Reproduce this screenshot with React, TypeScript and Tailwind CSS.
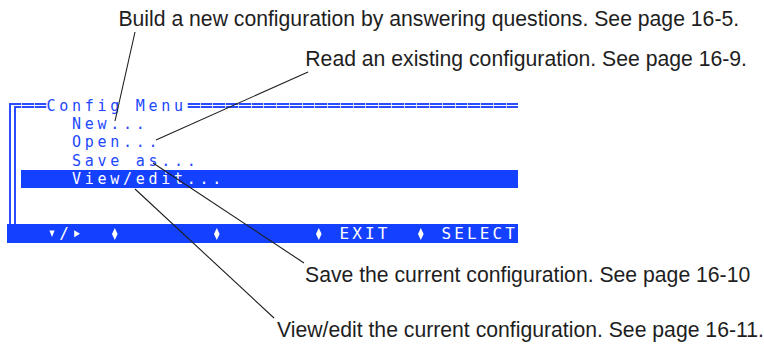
import React from "react";

// one terminal cell = 12.74px wide
const BLUE = "#1440ff";

function DoubleLine({ className = "" }: { className?: string }) {
  return (
    <div className={`mt-[6.5px] flex flex-col gap-[1px] ${className}`}>
      <div className="h-[2px] bg-[repeating-linear-gradient(90deg,#c3ccff_0_1px,#2a4dff_1px_12.74px)]" />
      <div className="h-[2px] bg-[repeating-linear-gradient(90deg,#c3ccff_0_1px,#2a4dff_1px_12.74px)]" />
    </div>
  );
}

function Glyph({ points }: { points: string }) {
  return (
    <span className="inline-block w-[12.74px] h-[19px] align-top">
      <svg width="12.74" height="19" viewBox="0 0 12.74 19">
        <polygon points={points} fill="#ffffff" />
      </svg>
    </span>
  );
}

const DIAMOND = "4.8,4 7.6,10 4.8,16 2,10";
const DOWN = "2.4,6.5 7.6,6.5 5,13";
const RIGHT = "2.2,6.2 8,9.7 2.2,13.2";

function MenuRow({ label, active }: { label?: string; active?: boolean }) {
  return (
    <div
      className={`h-[18.2px] leading-[18.2px] pl-[50.96px] whitespace-pre ${
        active ? "bg-[#1440ff] text-white" : "text-[#2248ff]"
      }`}
    >
      {label}
    </div>
  );
}

function Note({ text, className }: { text: string; className: string }) {
  return (
    <div className={`h-[24px] leading-[24px] text-[21.2px] text-[#1e1e1e] whitespace-nowrap ${className}`}>
      {text}
    </div>
  );
}

export default function App() {
  return (
    <div className="relative w-[764px] h-[344px] bg-white overflow-hidden font-['Liberation_Sans',Arial,sans-serif]">
      <Note text="Build a new configuration by answering questions. See page 16-5." className="mt-[7.4px] pl-[118.4px]" />
      <Note text="Read an existing configuration. See page 16-9." className="mt-[15.8px] pl-[305.3px]" />

      <div className="mt-[25.8px] ml-[8.3px] w-[509.6px] font-['DejaVu_Sans_Mono',monospace] text-[15px] tracking-[3.71px]">
        <div className="flex">
          <div className="w-[12.74px] shrink-0 flex flex-col">
            <div className="flex-1 mt-[6.5px] ml-[1.2px] border-l-2 border-t-2 border-[#2a4dff] flex flex-col">
              <div className="flex-1 mt-[1px] ml-[3px] border-l-2 border-t-2 border-[#2a4dff]" />
            </div>
          </div>
          <div className="w-[496.86px]">
            <div className="h-[18.2px] flex">
              <DoubleLine className="w-[25.48px]" />
              <span className="leading-[18.2px] text-[#2248ff] whitespace-pre">Config Menu</span>
              <DoubleLine className="flex-1" />
            </div>
            <MenuRow label="New..." />
            <MenuRow label="Open..." />
            <MenuRow label="Save as..." />
            <MenuRow label="View/edit..." active />
            <MenuRow />
            <MenuRow />
          </div>
        </div>
        <div
          className="-ml-[1.3px] pl-[1.3px] w-[510.9px] h-[19px] leading-[19px] text-white text-[16px] tracking-[3.11px] whitespace-pre flex"
          style={{ backgroundColor: BLUE }}
        >
          <span>{"   "}</span>
          <Glyph points={DOWN} />
          <span>/</span>
          <Glyph points={RIGHT} />
          <span>{"  "}</span>
          <Glyph points={DIAMOND} />
          <span>{"       "}</span>
          <Glyph points={DIAMOND} />
          <span>{"       "}</span>
          <Glyph points={DIAMOND} />
          <span>{" EXIT  "}</span>
          <Glyph points={DIAMOND} />
          <span>{" SELECT"}</span>
        </div>
      </div>

      <Note text="Save the current configuration. See page 16-10" className="mt-[20.2px] pl-[305px]" />
      <Note text="View/edit the current configuration. See page 16-11." className="mt-[31px] pl-[277px]" />

      {/* leader lines over the menu */}
      <svg className="absolute left-0 top-0 pointer-events-none" width="764" height="344">
        <g stroke="#1e1e1e" strokeWidth="1.1" fill="none">
          <line x1="135" y1="32" x2="115" y2="121" />
          <line x1="308" y1="72" x2="156" y2="140" />
          <line x1="153" y1="163" x2="304" y2="263" />
          <line x1="135" y1="189" x2="274" y2="318" />
        </g>
      </svg>
    </div>
  );
}
